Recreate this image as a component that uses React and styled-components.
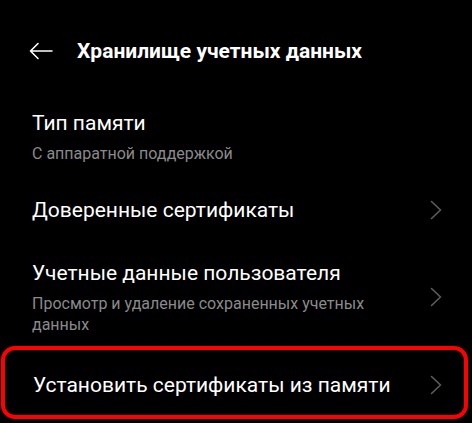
import React from "react";
import styled, { createGlobalStyle } from "styled-components";

const GlobalStyle = createGlobalStyle`
  html, body {
    margin: 0;
    background: #000;
  }
  body {
    font-family: Roboto, "Noto Sans", sans-serif;
    color: #fff;
  }
`;

function BackArrow() {
  return (
    <svg width="24" height="24" viewBox="0 0 24 24" fill="none">
      <path
        d="M23 12H2M9 4.5L1.5 12L9 19.5"
        stroke="#fff"
        strokeWidth="1.6"
        strokeLinecap="round"
        strokeLinejoin="round"
      />
    </svg>
  );
}

function Chevron() {
  return (
    <svg width="12" height="20" viewBox="0 0 12 20" fill="none">
      <path
        d="M1.5 1.5L10.5 10L1.5 18.5"
        stroke="#5e5e5e"
        strokeWidth="1.6"
        strokeLinecap="round"
        strokeLinejoin="round"
      />
    </svg>
  );
}

function Item({ title, subtitle, arrow }) {
  return (
    <Row $single={!subtitle}>
      <Texts>
        <ItemTitle>{title}</ItemTitle>
        {subtitle && <ItemSub>{subtitle}</ItemSub>}
      </Texts>
      {arrow && (
        <ArrowBox>
          <Chevron />
        </ArrowBox>
      )}
    </Row>
  );
}

export default function App() {
  return (
    <Screen>
      <GlobalStyle />
      <Header>
        <BackButton>
          <BackArrow />
        </BackButton>
        <HeaderTitle>Хранилище учетных данных</HeaderTitle>
      </Header>
      <List>
        <Item title="Тип памяти" subtitle="С аппаратной поддержкой" />
        <Item title="Доверенные сертификаты" arrow />
        <Item
          title="Учетные данные пользователя"
          subtitle="Просмотр и удаление сохраненных учетных данных"
          arrow
        />
        <Highlight>
          <Item title="Установить сертификаты из памяти" arrow />
        </Highlight>
      </List>
    </Screen>
  );
}

const Screen = styled.div`
  width: 472px;
  height: 423px;
  overflow: hidden;
  background: #000;
  box-sizing: border-box;
  padding: 0 30px 0 32px;
`;

const Header = styled.header`
  height: 92px;
  box-sizing: border-box;
  padding-top: 9px;
  display: flex;
  align-items: center;
`;

const BackButton = styled.div`
  width: 24px;
  height: 24px;
  margin-left: -3px;
  display: flex;
  align-items: center;
`;

const HeaderTitle = styled.h1`
  margin: 0 0 0 24px;
  font-size: 21px;
  line-height: 28px;
  font-weight: 700;
  color: #fff;
`;

const List = styled.div`
  display: flex;
  flex-direction: column;
`;

const Row = styled.div`
  display: flex;
  align-items: center;
  box-sizing: border-box;
  min-height: ${(p) => (p.$single ? "65px" : "auto")};
  padding: ${(p) => (p.$single ? "0" : "17px 0 13px")};
`;

const Texts = styled.div`
  flex: 1;
  min-width: 0;
  padding-right: 30px;
`;

const ItemTitle = styled.div`
  font-size: 21px;
  line-height: 28px;
  color: #fff;
  white-space: nowrap;
`;

const ItemSub = styled.div`
  margin-top: 6px;
  font-size: 16px;
  line-height: 21px;
  color: #8a8a8a;
`;

const ArrowBox = styled.div`
  width: 12px;
  height: 20px;
  display: flex;
`;

/* red frame around the last entry */
const Highlight = styled.div`
  margin: -2px -26px 0 -31px;
  padding: 4px 22px 0 28px;
  border: 4px solid #ff0000;
  border-radius: 14px;

  ${Row} {
    min-height: 61px;
  }
`;
